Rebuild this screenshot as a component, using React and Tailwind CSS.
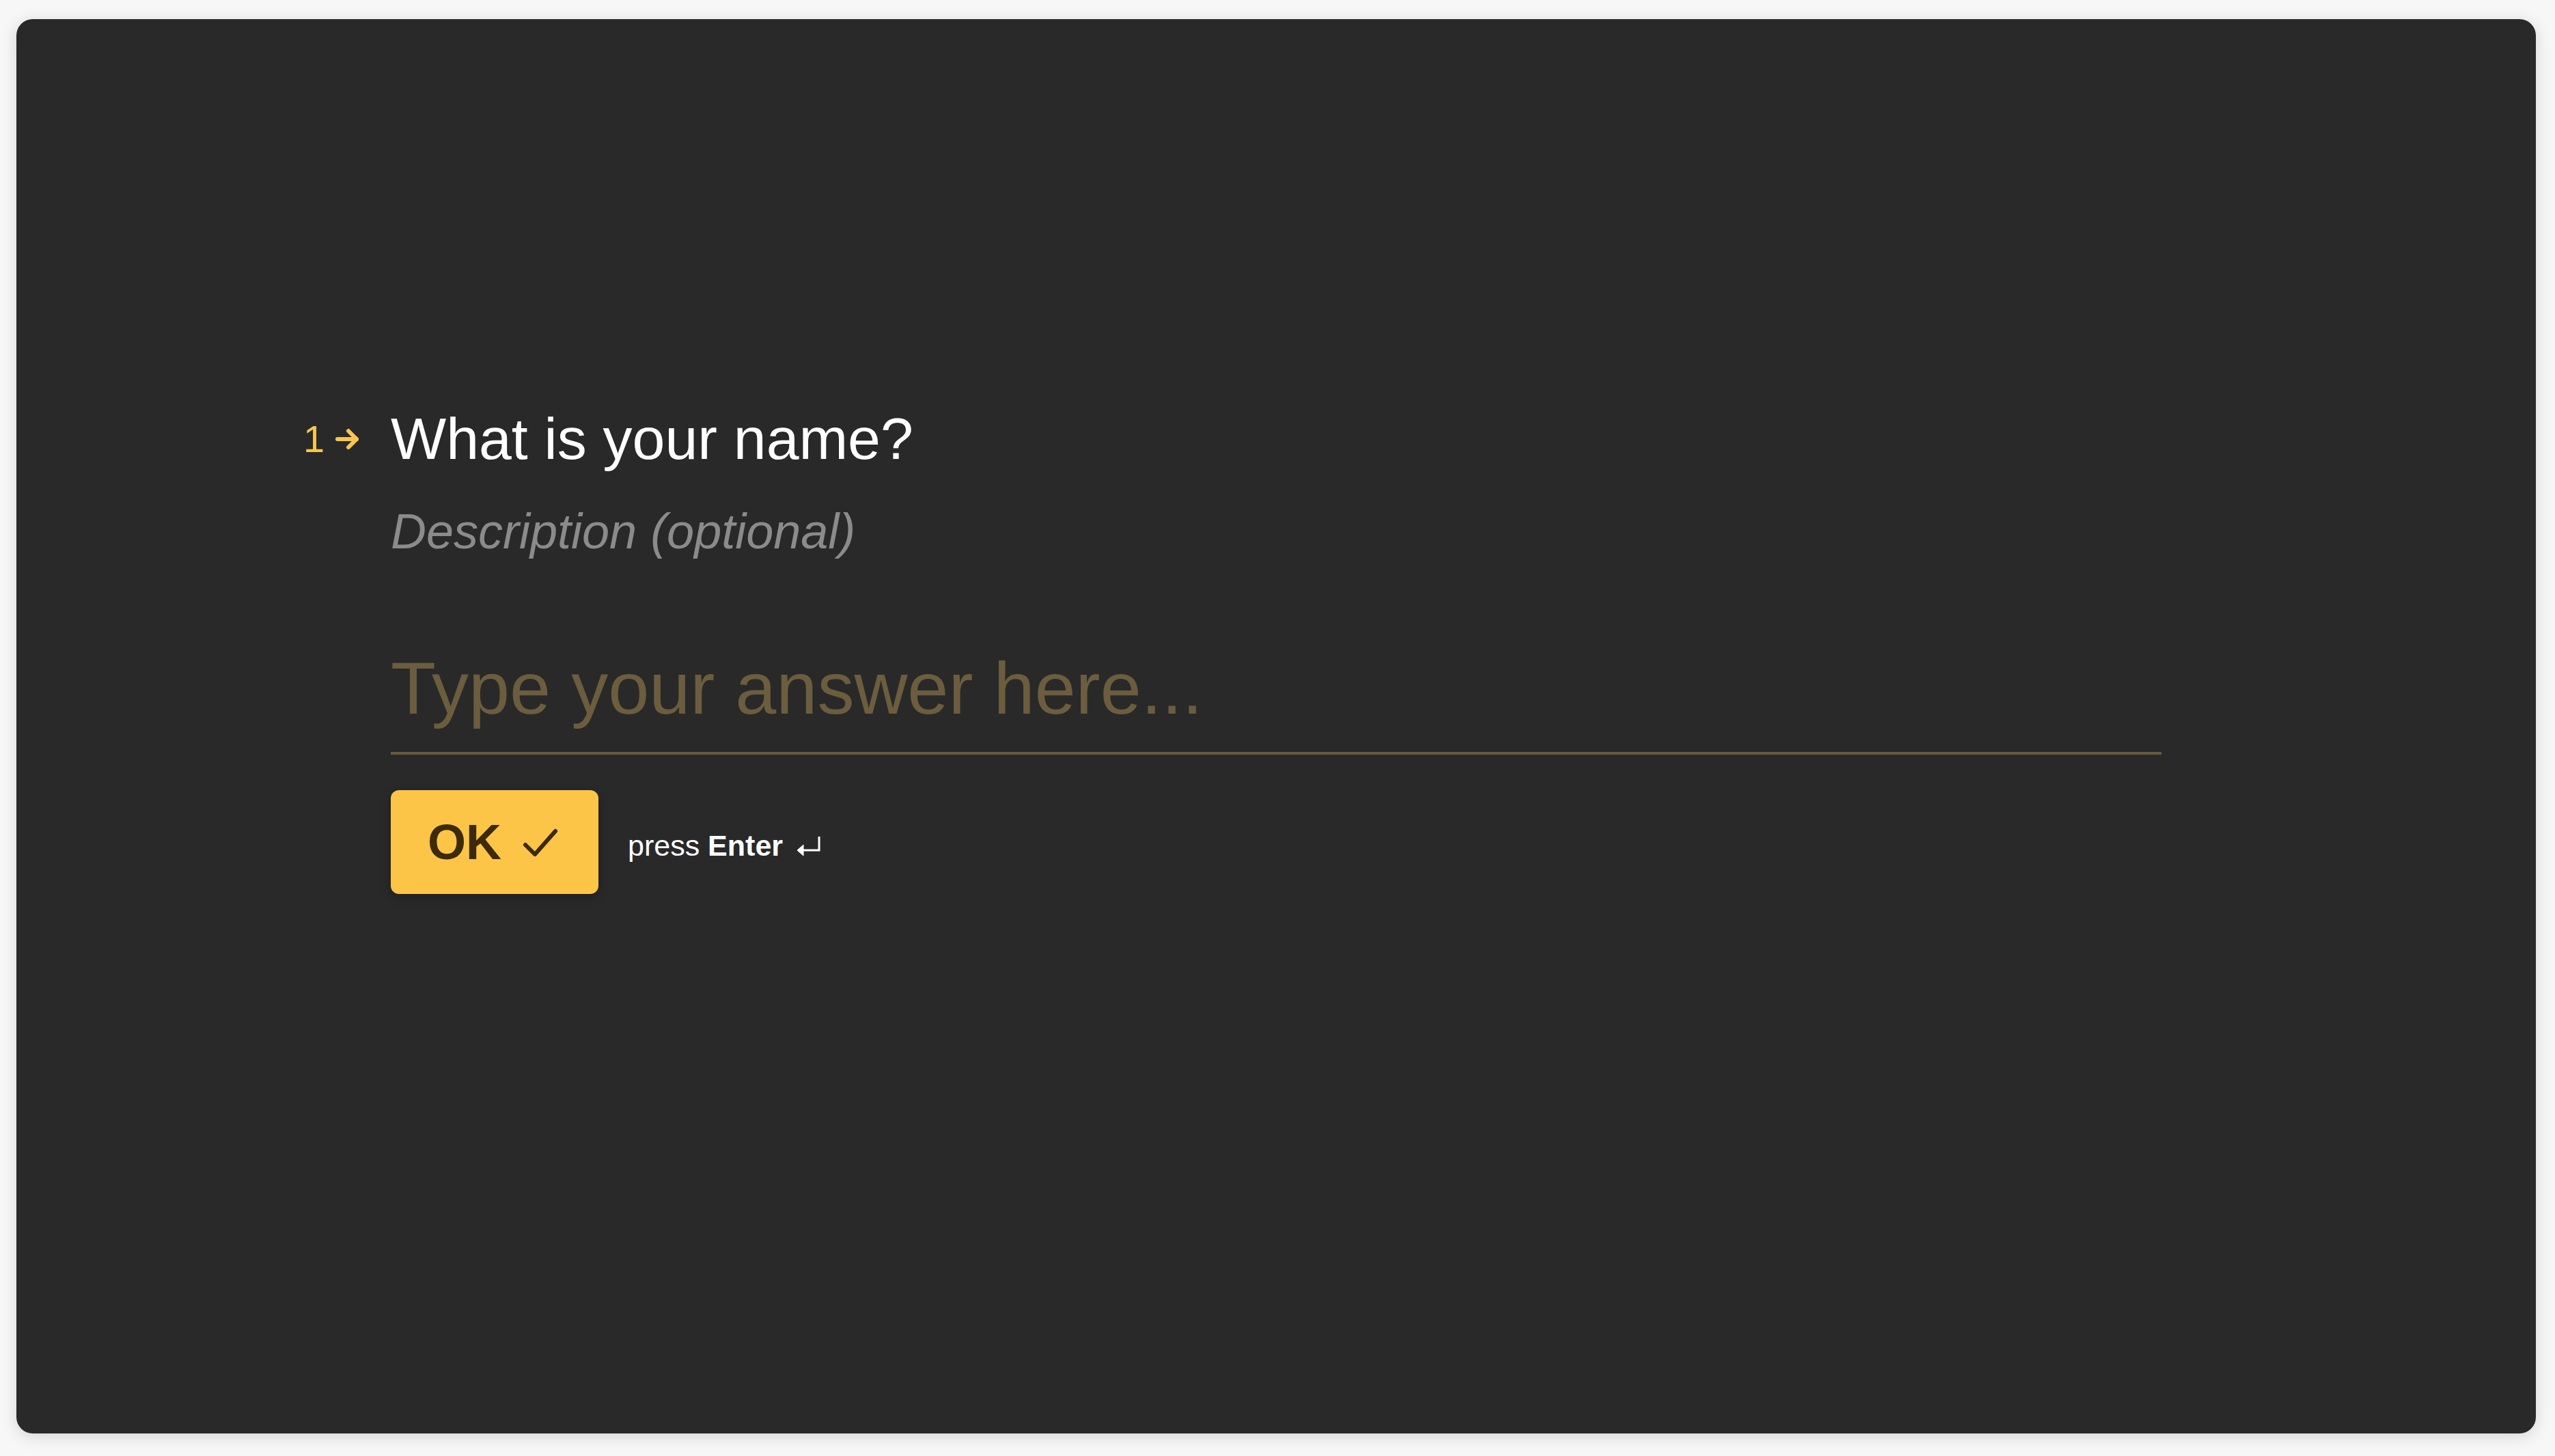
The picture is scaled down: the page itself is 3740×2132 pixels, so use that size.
import React from 'react';

const font = { fontFamily: '"Liberation Sans", Arial, sans-serif' };

// Small arrow next to the question number
const ArrowRight = () => (
  <svg width="37" height="32" viewBox="0 0 37 32" fill="none" stroke="#f7c550" strokeWidth="6" strokeLinecap="round" strokeLinejoin="round">
    <path d="M4 16h28" />
    <path d="M20 4l12 12-12 12" />
  </svg>
);

const Check = () => (
  <svg width="52" height="43" viewBox="0 0 52 43" fill="none" stroke="#3c2a08" strokeWidth="6" strokeLinecap="round" strokeLinejoin="round">
    <path d="M4 25l14 14L48 5" />
  </svg>
);

const ReturnKey = () => (
  <svg width="37" height="29" viewBox="0 0 37 29" fill="none" stroke="#ffffff" strokeWidth="3">
    <path d="M33 1v20H8" />
    <path d="M1 21l9-8v16z" fill="#ffffff" strokeWidth="1" />
  </svg>
);

const App = () => {
  return (
    <div className="min-h-screen bg-[#f7f7f7] pt-[28px] pl-[24px]" style={font}>
      <div className="w-[3688px] h-[2071px] rounded-[24px] bg-[#292929] shadow-[0_4px_24px_rgba(0,0,0,0.14)] pt-[563px] pl-[420px]">
        {/* question row */}
        <div className="flex items-center h-[103px]">
          <div className="w-[128px] flex items-center">
            <span className="text-[56px] leading-none text-[#f7c550]">1</span>
            <span className="ml-[15px] flex"><ArrowRight /></span>
          </div>
          <h1 className="text-[86px] leading-[103px] text-white font-normal">What is your name?</h1>
        </div>

        <div className="pl-[128px]">
          <p className="mt-[42px] text-[72px] leading-[85px] italic text-[#8b8b8b]">Description (optional)</p>

          <input
            type="text"
            placeholder="Type your answer here..."
            className="mt-[122px] block w-[2592px] h-[162px] pb-[28px] bg-transparent border-0 border-b-4 border-[#6a5a3a] text-[108px] text-[#6b5d3e] placeholder:text-[#6b5d3e] outline-none"
          />

          <div className="mt-[52px] flex items-center">
            <button className="w-[304px] h-[152px] rounded-[12px] bg-[#fcc548] pl-[54px] flex items-center shadow-[0_4px_14px_rgba(0,0,0,0.25)]">
              <span className="text-[72px] leading-none font-bold text-[#3c2a08]">OK</span>
              <span className="ml-[31px] flex"><Check /></span>
            </button>
            <div className="ml-[43px] mt-[10px] flex items-center text-[43px] leading-none text-white">
              <span>press&nbsp;</span>
              <span className="font-bold">Enter</span>
              <span className="ml-[20px] flex"><ReturnKey /></span>
            </div>
          </div>
        </div>
      </div>
    </div>
  );
};

export default App;
